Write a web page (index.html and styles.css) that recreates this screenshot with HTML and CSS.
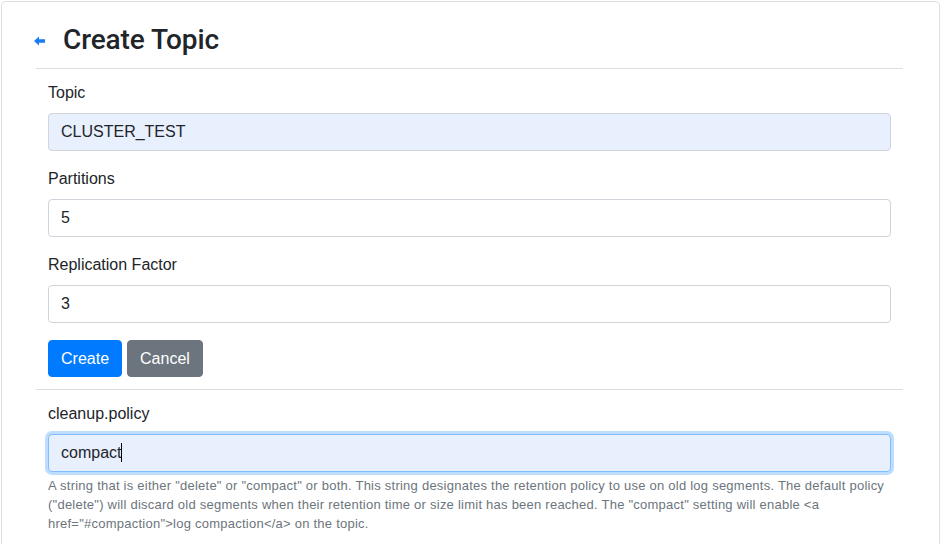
FILE: index.html
```html
<!DOCTYPE html>
<html>
<head>
<meta charset="utf-8">
<link rel="stylesheet" href="styles.css">
</head>
<body>
<div class="card">
  <div class="header">
    <a class="back" href="#"><svg width="11" height="10" viewBox="0 0 11 10"><path d="M0 5 L5 0.5 L5 3.3 L11 3.3 L11 6.7 L5 6.7 L5 9.5 Z" fill="#1a7cf5"/></svg></a>
    <h2 class="title">Create Topic</h2>
  </div>
  <hr class="rule">
  <div class="form">
    <div class="group">
      <label class="label">Topic</label>
      <div class="input autofill">CLUSTER_TEST</div>
    </div>
    <div class="group">
      <label class="label">Partitions</label>
      <div class="input">5</div>
    </div>
    <div class="group">
      <label class="label">Replication Factor</label>
      <div class="input">3</div>
    </div>
    <div class="actions">
      <button class="btn btn-primary">Create</button>
      <button class="btn btn-secondary">Cancel</button>
    </div>
  </div>
  <hr class="rule rule2">
  <div class="form form2">
    <div class="group">
      <label class="label">cleanup.policy</label>
      <div class="input autofill focus">compact<span class="caret"></span></div>
      <p class="help">A string that is either "delete" or "compact" or both. This string designates the retention policy to use on old log segments. The default policy ("delete") will discard old segments when their retention time or size limit has been reached. The "compact" setting will enable &lt;a href="#compaction"&gt;log compaction&lt;/a&gt; on the topic.</p>
    </div>
  </div>
</div>
</body>
</html>
```

FILE: styles.css
```css
html, body {
  margin: 0;
  padding: 0;
  background: #fff;
}
body {
  font-family: "Liberation Sans", Arial, sans-serif;
  color: #212529;
  font-size: 16px;
  line-height: 1.5;
}
.card {
  margin: 1px 2px 0 1px;
  border: 1px solid #dcdfe3;
  border-bottom: none;
  border-radius: 5px 5px 0 0;
  height: 560px;
  padding: 0 36px 0 34px;
}
.header {
  display: flex;
  align-items: center;
  height: 56px;
  padding-top: 10px;
}
.back {
  display: flex;
  width: 29px;
  margin-left: -2px;
  margin-top: 1px;
}
.title {
  margin: 0;
  font-family: Roboto, "Liberation Sans", sans-serif;
  font-weight: 500;
  font-size: 28px;
  line-height: 1.2;
  color: #212529;
  letter-spacing: -0.1px;
}
.rule {
  margin: 0;
  border: 0;
  border-top: 1px solid #dadfe4;
}
.form {
  padding: 12px 12px 0 12px;
}
.group {
  margin-bottom: 16px;
}
.label {
  display: block;
  margin-bottom: 8px;
  padding-top: 1px;
  margin-top: -1px;
}
.input {
  height: 38px;
  box-sizing: border-box;
  border: 1px solid #ced4da;
  border-radius: 4px;
  padding: 6px 12px;
  color: #212529;
  background: #fff;
}
.autofill {
  background: #e8f0fe;
}
.focus {
  border-color: #80bdff;
  box-shadow: 0 0 0 3px rgba(0, 123, 255, 0.25);
}
.caret {
  display: inline-block;
  width: 1px;
  height: 19px;
  background: #000;
  vertical-align: -4px;
}
.actions {
  display: flex;
  gap: 5px;
  padding-top: 1px;
  padding-bottom: 12px;
}
.btn {
  font-family: "Liberation Sans", Arial, sans-serif;
  font-size: 16px;
  line-height: 24px;
  height: 37px;
  padding: 6px 12px;
  border: 1px solid transparent;
  border-radius: 4px;
  color: #fff;
}
.btn-primary {
  background: #007bff;
  border-color: #007bff;
}
.btn-secondary {
  background: #6c757d;
  border-color: #6c757d;
}
.form2 {
  padding-top: 12px;
}
.help {
  margin: 4px 0 0 0;
  font-size: 13px;
  line-height: 19px;
  letter-spacing: 0.24px;
  color: #6c757d;
}
```
